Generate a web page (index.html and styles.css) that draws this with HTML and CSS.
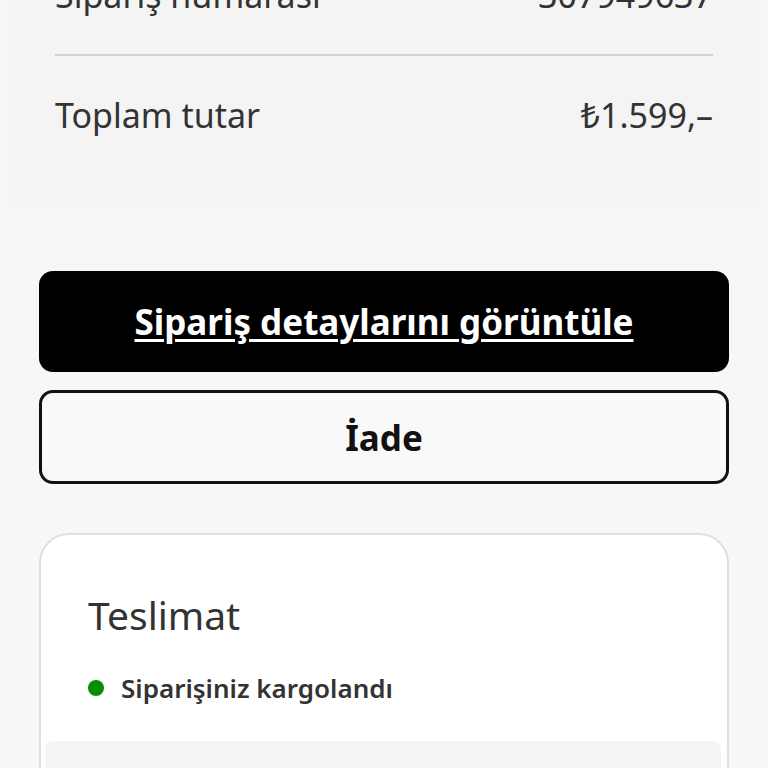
FILE: index.html
```html
<!DOCTYPE html>
<html lang="tr">
<head>
    <meta charset="UTF-8">
    <meta name="viewport" content="width=device-width, initial-scale=1.0">
    <title>Sipariş</title>
    <link rel="stylesheet" href="styles.css">
</head>
<body>
    <div class="summary">
        <div class="row row-first">
            <span>Sipariş numarası</span>
            <span>307949637</span>
        </div>
        <hr class="divider">
        <div class="row">
            <span>Toplam tutar</span>
            <span>₺1.599,–</span>
        </div>
    </div>

    <div class="actions">
        <button class="btn btn-primary"><span class="link">Sipariş detaylarını görüntüle</span></button>
        <button class="btn btn-outline">İade</button>
    </div>

    <div class="card">
        <h2 class="card-title">Teslimat</h2>
        <div class="status">
            <span class="dot"></span>
            <span>Siparişiniz kargolandı</span>
        </div>
        <div class="card-inner"></div>
    </div>
</body>
</html>
```

FILE: styles.css
```css
body {
    margin: 0;
    background-color: #f7f7f7;
    color: #333;
    font-family: "Noto Sans", "Open Sans", sans-serif;
    height: 768px;
    overflow: hidden;
}
.summary {
    margin: 0 8px;
    background-color: #f4f4f4;
    padding: 0 47px;
    height: 207px;
    box-sizing: border-box;
    overflow: hidden;
}
.row {
    display: flex;
    justify-content: space-between;
    font-size: 34px;
    line-height: 48px;
}
.row-first {
    margin-top: -29px;
}
.divider {
    border: none;
    border-top: 2px solid #d2d2d2;
    margin: 35px 0 35px;
}
.actions {
    display: flex;
    flex-direction: column;
    gap: 18px;
    padding: 64px 39px 0;
}
.btn {
    font-family: inherit;
    font-weight: 700;
    font-size: 35px;
    border-radius: 14px;
    cursor: pointer;
}
.btn-primary {
    background-color: #000;
    color: #fff;
    border: none;
    height: 101px;
}
.link {
    text-decoration: underline;
    text-decoration-thickness: 3px;
    text-underline-offset: 4px;
}
.btn-outline {
    background-color: #f9f9f9;
    color: #111;
    border: 3px solid #111;
    height: 94px;
}
.card {
    margin: 49px 39px 0;
    background-color: #fff;
    border: 2px solid #e0e0e0;
    border-radius: 30px;
    padding: 52px 6px 0 4px;
}
.card-title {
    margin: 0 0 0 43px;
    font-size: 39px;
    font-weight: 400;
    line-height: 56px;
}
.status {
    display: flex;
    align-items: center;
    gap: 17px;
    margin: 27px 0 0 43px;
    font-size: 26px;
    line-height: 36px;
    font-weight: 600;
}
.dot {
    width: 16px;
    height: 16px;
    border-radius: 50%;
    background-color: #0a8a0a;
}
.card-inner {
    margin-top: 35px;
    height: 200px;
    background-color: #f5f5f5;
    border-radius: 8px;
}
```
